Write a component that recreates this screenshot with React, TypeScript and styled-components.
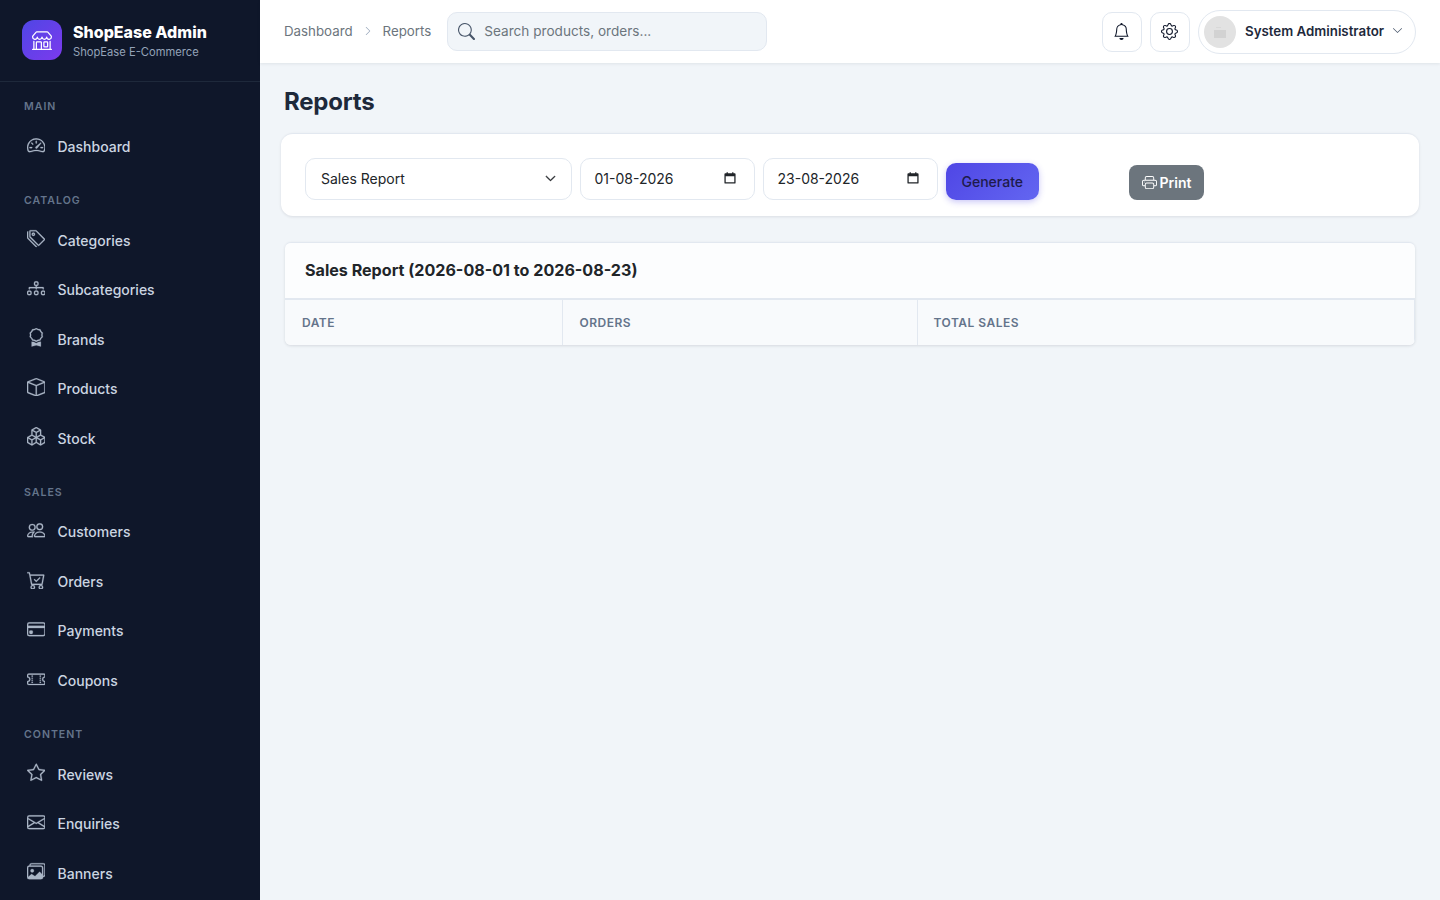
import React from "react"
import styled, { createGlobalStyle } from "styled-components"
import {
  BsAward,
  BsBell,
  BsBox,
  BsBoxes,
  BsCartCheck,
  BsChevronDown,
  BsChevronRight,
  BsCreditCard,
  BsDiagram3,
  BsEnvelope,
  BsGear,
  BsImages,
  BsPeople,
  BsPrinter,
  BsSearch,
  BsShop,
  BsSpeedometer2,
  BsStar,
  BsTags,
  BsTicketPerforated,
} from "react-icons/bs"

const GlobalStyle = createGlobalStyle`
  * {
    box-sizing: border-box;
  }
  html, body {
    margin: 0;
    height: 100%;
    overflow: hidden;
    font-family: Inter, "Noto Sans", sans-serif;
    background: #f1f5f9;
  }
`

const Shell = styled.div`
  display: flex;
  height: 900px;
`

const Sidebar = styled.aside`
  flex: 0 0 260px;
  height: 900px;
  overflow: hidden;
  background: #0f172a;
`

const Brand = styled.div`
  display: flex;
  align-items: center;
  gap: 11px;
  height: 82px;
  padding: 0 22px 1px;
  border-bottom: 1px solid #1e293b;
`

const BrandLogo = styled.div`
  display: flex;
  align-items: center;
  justify-content: center;
  width: 40px;
  height: 40px;
  border-radius: 12px;
  background: linear-gradient(135deg, #4f46e5, #7c3aed);
  color: #fff;
  font-size: 20px;
`

const BrandText = styled.div`
  padding-top: 2px;
`

const BrandName = styled.div`
  font-size: 16px;
  line-height: 20px;
  font-weight: 800;
  color: #fff;
`

const BrandSub = styled.div`
  margin-top: 2px;
  font-size: 11.2px;
  line-height: 16px;
  color: #94a3b8;
`

const Nav = styled.nav`
  padding-top: 17px;
`

const SectionLabel = styled.div`
  height: 16px;
  margin: 0 0 15px;
  padding-left: 24px;
  font-size: 10.56px;
  line-height: 16px;
  font-weight: 600;
  letter-spacing: 1px;
  color: #64748b;
`

const Section = styled.div`
  margin-bottom: 21.75px;
`

const NavItem = styled.a`
  display: flex;
  align-items: center;
  gap: 12.5px;
  height: 49.5px;
  padding-left: 26.5px;
  font-size: 14px;
  font-weight: 500;
  color: #cbd5e1;
  &:first-of-type {
    margin-top: -8.5px;
  }
  svg {
    flex: none;
    width: 18.5px;
    height: 18.5px;
    margin-top: -3px;
    color: #aab6c6;
    stroke: currentColor;
    stroke-width: 0.2px;
  }
`

const Main = styled.div`
  flex: 1;
  min-width: 0;
`

const TopBar = styled.header`
  display: flex;
  align-items: center;
  height: 63px;
  padding: 0 24px;
  background: #fff;
  box-shadow: 0 1px 3px rgba(15, 23, 42, 0.08);
`

const Crumbs = styled.div`
  display: flex;
  align-items: center;
  gap: 10px;
  margin: -1px 16px 0 0;
  font-size: 13.3px;
  color: #6c757d;
  svg {
    width: 10px;
    height: 10px;
    color: #94a3b8;
  }
`

const SearchBox = styled.div`
  display: flex;
  align-items: center;
  gap: 9px;
  width: 320px;
  height: 39px;
  padding: 0 10px 1px;
  border: 1px solid #e2e8f0;
  border-radius: 10px;
  background: #f1f5f9;
  font-size: 13.6px;
  color: #6c757d;
  svg {
    width: 17px;
    height: 17px;
    color: #475569;
  }
`

const TopActions = styled.div`
  display: flex;
  align-items: center;
  gap: 8px;
  margin-left: auto;
`

const IconButton = styled.button`
  display: flex;
  align-items: center;
  justify-content: center;
  width: 40px;
  height: 40px;
  padding: 0 1px 0 0;
  border: 1px solid #e2e8f0;
  border-radius: 10px;
  background: #fff;
  color: #0f172a;
  font-size: 17px;
`

const UserPill = styled.div`
  display: flex;
  align-items: center;
  width: 218px;
  height: 44px;
  padding: 0 12px 0 5px;
  border: 1px solid #e2e8f0;
  border-radius: 22px;
  font-size: 13.3px;
  font-weight: 600;
  color: #1e293b;
  > svg {
    width: 11px;
    height: 11px;
    margin-left: auto;
    margin-top: -3px;
    color: #475569;
  }
`

const UserName = styled.span`
  margin-top: -1px;
`

const Avatar = styled.div`
  display: flex;
  align-items: center;
  justify-content: center;
  width: 32px;
  height: 32px;
  margin-right: 9px;
  border-radius: 50%;
  background: #e2e2e2;
`

const Content = styled.main`
  padding: 0 21px;
`

const PageTitle = styled.h1`
  margin: 0;
  padding: 24px 3px 16px;
  font-size: 24px;
  line-height: 30px;
  font-weight: 700;
  letter-spacing: -0.2px;
  color: #1e293b;
`

const FilterCard = styled.section`
  display: grid;
  grid-template-columns: repeat(12, 1fr);
  gap: 8px;
  align-items: end;
  height: 83px;
  padding: 24px 24px 16px;
  border-top: 1px solid #e2e8f0;
  border-radius: 12px;
  background: #fff;
  box-shadow: 0 1px 3px rgba(15, 23, 42, 0.1);
`

const Field = styled.div<{ $span: number; $inset: number }>`
  grid-column: span ${(p) => p.$span};
  display: flex;
  align-items: center;
  justify-content: space-between;
  height: 42px;
  padding: 0 ${(p) => p.$inset}px 2px;
  border: 1px solid #e2e8f0;
  border-radius: 10px;
  background: #fff;
  font-size: 14px;
  color: #212529;
`

const SelectChevron = styled(BsChevronDown)`
  width: 11px;
  height: 11px;
  stroke-width: 1px;
  color: #212529;
`

const DateIcon = styled.svg`
  width: 12px;
  height: 12px;
  margin-right: 4px;
  fill: #212529;
`

const ButtonCell = styled.div`
  grid-column: span 2;
`

const GenerateButton = styled.button`
  display: block;
  height: 37px;
  padding: 0 16px;
  border: 0;
  border-radius: 10px;
  background: linear-gradient(135deg, #4f46e5, #6366f1);
  box-shadow: 0 2px 6px rgba(79, 70, 229, 0.3);
  font-family: inherit;
  font-size: 14px;
  font-weight: 500;
  color: #1e1b4b;
`

const PrintButton = styled.button`
  display: flex;
  align-items: center;
  gap: 3px;
  height: 35px;
  padding: 0 13px;
  border: 0;
  border-radius: 8px;
  background: #6c757d;
  font-family: inherit;
  font-size: 14px;
  font-weight: 600;
  color: #fff;
  svg {
    width: 15px;
    height: 15px;
  }
`

const ReportCard = styled.section`
  margin: 26px 4px 0;
  border-top: 1px solid #e2e8f0;
  border-radius: 6px;
  background: #fcfdfe;
  box-shadow: 0 1px 3px rgba(15, 23, 42, 0.12);
  overflow: hidden;
`

const ReportTitle = styled.h2`
  margin: 0;
  padding: 0 20px;
  height: 55px;
  font-size: 16.1px;
  line-height: 55px;
  font-weight: 700;
  color: #212529;
`

const ReportTable = styled.table`
  width: 100%;
  border-collapse: collapse;
  table-layout: fixed;
  border-top: 2px solid #e2e8f0;
`

const HeadCell = styled.th`
  height: 46px;
  padding: 0 16px;
  border-right: 1px solid #e2e8f0;
  background: #f8fafc;
  text-align: left;
  font-size: 12px;
  font-weight: 600;
  letter-spacing: 0.5px;
  color: #64748b;
  &:nth-child(-n + 2) {
    padding-left: 17px;
  }
`

const CalendarIcon = () => (
  <DateIcon viewBox="0 0 14 14" aria-hidden="true">
    <path d="M1.5 1.5h11a1 1 0 0 1 1 1v10a1 1 0 0 1-1 1h-11a1 1 0 0 1-1-1v-10a1 1 0 0 1 1-1zM2 5v7h10V5z" fillRule="evenodd" />
    <rect x="3" y="0.3" width="1.5" height="2" />
    <rect x="9.5" y="0.3" width="1.5" height="2" />
  </DateIcon>
)

const AvatarImage = () => (
  <svg width="14" height="14" viewBox="0 0 14 14" aria-hidden="true">
    <rect x="1" y="5" width="12" height="8" fill="#d2d2d2" />
    <rect x="3" y="2" width="5" height="1" fill="#d8d8d8" />
  </svg>
)

const navSections = [
  { title: "MAIN", items: [{ label: "Dashboard", icon: BsSpeedometer2 }] },
  {
    title: "CATALOG",
    items: [
      { label: "Categories", icon: BsTags },
      { label: "Subcategories", icon: BsDiagram3 },
      { label: "Brands", icon: BsAward },
      { label: "Products", icon: BsBox },
      { label: "Stock", icon: BsBoxes },
    ],
  },
  {
    title: "SALES",
    items: [
      { label: "Customers", icon: BsPeople },
      { label: "Orders", icon: BsCartCheck },
      { label: "Payments", icon: BsCreditCard },
      { label: "Coupons", icon: BsTicketPerforated },
    ],
  },
  {
    title: "CONTENT",
    items: [
      { label: "Reviews", icon: BsStar },
      { label: "Enquiries", icon: BsEnvelope },
      { label: "Banners", icon: BsImages },
    ],
  },
]

const App = () => {
  return (
    <Shell>
      <GlobalStyle />
      <Sidebar>
        <Brand>
          <BrandLogo>
            <BsShop />
          </BrandLogo>
          <BrandText>
            <BrandName>ShopEase Admin</BrandName>
            <BrandSub>ShopEase E-Commerce</BrandSub>
          </BrandText>
        </Brand>
        <Nav>
          {navSections.map((section) => (
            <Section key={section.title}>
              <SectionLabel>{section.title}</SectionLabel>
              {section.items.map(({ label, icon: Icon }) => (
                <NavItem key={label}>
                  <Icon />
                  {label}
                </NavItem>
              ))}
            </Section>
          ))}
        </Nav>
      </Sidebar>
      <Main>
        <TopBar>
          <Crumbs>
            <span>Dashboard</span>
            <BsChevronRight />
            <span>Reports</span>
          </Crumbs>
          <SearchBox>
            <BsSearch />
            Search products, orders...
          </SearchBox>
          <TopActions>
            <IconButton>
              <BsBell />
            </IconButton>
            <IconButton>
              <BsGear />
            </IconButton>
            <UserPill>
              <Avatar>
                <AvatarImage />
              </Avatar>
              <UserName>System Administrator</UserName>
              <BsChevronDown />
            </UserPill>
          </TopActions>
        </TopBar>
        <Content>
          <PageTitle>Reports</PageTitle>
          <FilterCard>
            <Field $span={3} $inset={15}>
              Sales Report
              <SelectChevron />
            </Field>
            <Field $span={2} $inset={14}>
              01-08-2026
              <CalendarIcon />
            </Field>
            <Field $span={2} $inset={14}>
              23-08-2026
              <CalendarIcon />
            </Field>
            <ButtonCell>
              <GenerateButton>Generate</GenerateButton>
            </ButtonCell>
            <ButtonCell>
              <PrintButton>
                <BsPrinter />
                Print
              </PrintButton>
            </ButtonCell>
          </FilterCard>
          <ReportCard>
            <ReportTitle>Sales Report (2026-08-01 to 2026-08-23)</ReportTitle>
            <ReportTable>
              <colgroup>
                <col width="277" />
                <col width="355" />
                <col />
              </colgroup>
              <thead>
                <tr>
                  <HeadCell>DATE</HeadCell>
                  <HeadCell>ORDERS</HeadCell>
                  <HeadCell>TOTAL SALES</HeadCell>
                </tr>
              </thead>
            </ReportTable>
          </ReportCard>
        </Content>
      </Main>
    </Shell>
  )
}

export default App
